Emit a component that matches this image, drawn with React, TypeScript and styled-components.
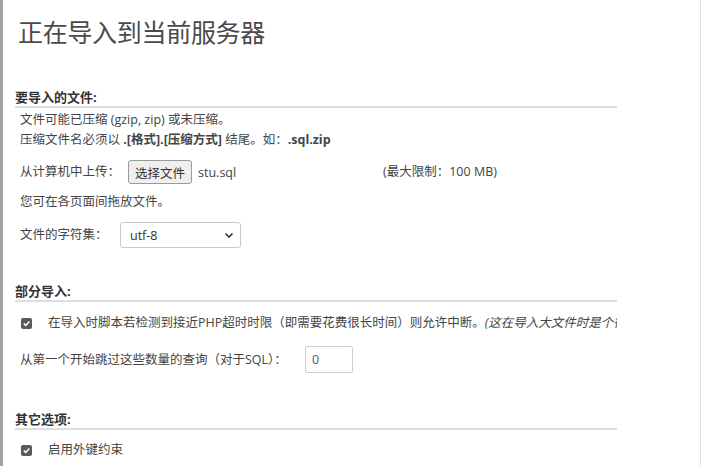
import React from "react";
import styled, { createGlobalStyle } from "styled-components";

const Global = createGlobalStyle`
  html, body { margin: 0; padding: 0; background: #fff; }
  * { box-sizing: border-box; }
`;

const FONT = `"Open Sans", "Noto Sans CJK SC", sans-serif`;

const Page = styled.div`
  width: 701px;
  height: 466px;
  overflow: hidden;
  border-left: 3px solid #a3a3a3;
  border-right: 1px solid #e4e4e4;
  padding: 17px 0 0 12px;
  font-family: ${FONT};
  font-size: 12.5px;
  color: #444;
`;

const Title = styled.h1`
  margin: 0 0 0 3px;
  font-size: 25px;
  line-height: 30px;
  font-weight: 400;
  color: #4a4a4a;
  letter-spacing: -0.3px;
`;

const Section = styled.section<{ $mt: number }>`
  width: 602px;
  margin-top: ${(p) => p.$mt}px;
  overflow: hidden;
`;

const Heading = styled.h2`
  margin: 0;
  font-size: 13px;
  line-height: 18px;
  font-weight: 700;
  color: #333;
  border-bottom: 2px solid #dedede;
`;

const Body = styled.div`
  padding-left: 5px;
  display: flex;
  flex-direction: column;
`;

const Line = styled.div<{ $mt?: number }>`
  line-height: 20px;
  margin-top: ${(p) => p.$mt ?? 0}px;
  white-space: nowrap;
`;

const Row = styled.div<{ $mt: number; $gap?: number }>`
  display: flex;
  align-items: center;
  margin-top: ${(p) => p.$mt}px;
  gap: ${(p) => p.$gap ?? 0}px;
  white-space: nowrap;
`;

const Label = styled.span<{ $w?: number }>`
  line-height: 20px;
  ${(p) => (p.$w ? `width: ${p.$w}px; flex: none;` : "")}
`;

const FileButton = styled.button`
  height: 24px;
  padding: 0 6px;
  font-family: ${FONT};
  font-size: 12.5px;
  color: #333;
  background: #efefef;
  border: 1px solid #9a9a9a;
  border-radius: 3px;
  margin-right: 6px;
`;

const FileName = styled.span`
  width: 185px;
  flex: none;
`;

const SelectBox = styled.div`
  width: 121px;
  height: 26px;
  border: 1px solid #c9c9c9;
  border-radius: 3px;
  background: #fff;
  display: flex;
  align-items: center;
  justify-content: space-between;
  padding: 0 6px 0 9px;
  color: #333;
`;

const NumberBox = styled.div`
  width: 48px;
  height: 27px;
  border: 1px solid #cfcfcf;
  border-radius: 2px;
  display: flex;
  align-items: center;
  padding-left: 6px;
  color: #556;
`;

const Check = styled.span`
  width: 11px;
  height: 11px;
  flex: none;
  border-radius: 2px;
  background: #5a5a5a;
  display: inline-flex;
  align-items: center;
  justify-content: center;
  margin: 0 16px 0 1px;
`;

const Italic = styled.i`
  font-style: italic;
`;

const CheckMark = () => (
  <Check>
    <svg width="9" height="9" viewBox="0 0 9 9">
      <path d="M1.8 4.6 L3.7 6.4 L7.3 2.4" fill="none" stroke="#fff" strokeWidth="1.5" />
    </svg>
  </Check>
);

const Chevron = () => (
  <svg width="10" height="10" viewBox="0 0 10 10">
    <path d="M1.5 3.5 L5 7 L8.5 3.5" fill="none" stroke="#333" strokeWidth="1.6" />
  </svg>
);

export default function App() {
  return (
    <>
      <Global />
      <Page>
        <Title>正在导入到当前服务器</Title>

        <Section $mt={41}>
          <Heading>要导入的文件:</Heading>
          <Body>
            <Line $mt={2}>文件可能已压缩 (gzip, zip) 或未压缩。</Line>
            <Line>
              压缩文件名必须以 <b>.[格式].[压缩方式]</b> 结尾。如：<b>.sql.zip</b>
            </Line>
            <Row $mt={10}>
              <Label $w={108}>从计算机中上传：</Label>
              <FileButton>选择文件</FileButton>
              <FileName>stu.sql</FileName>
              <Label>(最大限制：100 MB)</Label>
            </Row>
            <Line $mt={8}>您可在各页面间拖放文件。</Line>
            <Row $mt={10}>
              <Label $w={100}>文件的字符集：</Label>
              <SelectBox>
                <span>utf-8</span>
                <Chevron />
              </SelectBox>
            </Row>
          </Body>
        </Section>

        <Section $mt={34}>
          <Heading>部分导入:</Heading>
          <Body>
            <Row $mt={11}>
              <CheckMark />
              <Label>
                在导入时脚本若检测到接近PHP超时时限（即需要花费很长时间）则允许中断。
                <Italic>(这在导入大文件时是个很好的方法，不过它会中断事务。)</Italic>
              </Label>
            </Row>
            <Row $mt={13}>
              <Label $w={285}>从第一个开始跳过这些数量的查询（对于SQL）：</Label>
              <NumberBox>0</NumberBox>
            </Row>
          </Body>
        </Section>

        <Section $mt={37}>
          <Heading>其它选项:</Heading>
          <Body>
            <Row $mt={10}>
              <CheckMark />
              <Label>启用外键约束</Label>
            </Row>
          </Body>
        </Section>
      </Page>
    </>
  );
}
